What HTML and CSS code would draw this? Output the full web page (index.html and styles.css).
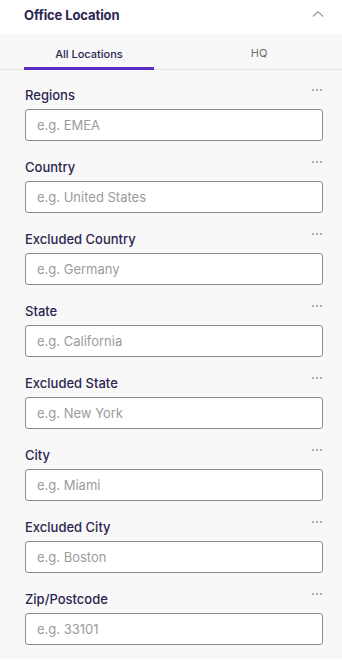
FILE: index.html
```html
<!DOCTYPE html>
<html lang="en">

<head>
    <meta charset="UTF-8">
    <meta name="viewport" content="width=device-width, initial-scale=1.0">
    <title>Office Location</title>
    <link rel="stylesheet" href="styles.css">
</head>

<body>

    <div class="section-header">
        <h3>Office Location</h3>
        <svg class="chevron" width="12" height="8" viewBox="0 0 12 8">
            <path d="M1 6.5 L6 1.5 L11 6.5" fill="none" stroke="#9a9a9a" stroke-width="1.2" />
        </svg>
    </div>

    <div class="panel">
        <div class="tabs">
            <div class="tab active">All Locations</div>
            <div class="tab">HQ</div>
        </div>

        <div class="fields">
            <div class="field">
                <div class="field-top">
                    <label>Regions</label>
                    <span class="more"><i></i><i></i><i></i></span>
                </div>
                <input type="text" placeholder="e.g. EMEA">
            </div>
            <div class="field">
                <div class="field-top">
                    <label>Country</label>
                    <span class="more"><i></i><i></i><i></i></span>
                </div>
                <input type="text" placeholder="e.g. United States">
            </div>
            <div class="field">
                <div class="field-top">
                    <label>Excluded Country</label>
                    <span class="more"><i></i><i></i><i></i></span>
                </div>
                <input type="text" placeholder="e.g. Germany">
            </div>
            <div class="field">
                <div class="field-top">
                    <label>State</label>
                    <span class="more"><i></i><i></i><i></i></span>
                </div>
                <input type="text" placeholder="e.g. California">
            </div>
            <div class="field">
                <div class="field-top">
                    <label>Excluded State</label>
                    <span class="more"><i></i><i></i><i></i></span>
                </div>
                <input type="text" placeholder="e.g. New York">
            </div>
            <div class="field">
                <div class="field-top">
                    <label>City</label>
                    <span class="more"><i></i><i></i><i></i></span>
                </div>
                <input type="text" placeholder="e.g. Miami">
            </div>
            <div class="field">
                <div class="field-top">
                    <label>Excluded City</label>
                    <span class="more"><i></i><i></i><i></i></span>
                </div>
                <input type="text" placeholder="e.g. Boston">
            </div>
            <div class="field">
                <div class="field-top">
                    <label>Zip/Postcode</label>
                    <span class="more"><i></i><i></i><i></i></span>
                </div>
                <input type="text" placeholder="e.g. 33101">
            </div>
        </div>
    </div>

</body>

</html>
```

FILE: styles.css
```css
* {
    box-sizing: border-box;
    font-family: Inter, "Noto Sans", sans-serif;
}

body {
    margin: 0;
    padding: 0;
    background-color: #ffffff;
    color: #2b2550;
}

/* header */
.section-header {
    height: 34px;
    display: flex;
    justify-content: space-between;
    align-items: center;
    padding: 0 18px 5px 24px;
}

.section-header h3 {
    margin: 0;
    font-size: 13px;
    font-weight: 700;
    color: #2b2550;
    letter-spacing: -0.1px;
}

.chevron {
    margin-top: -1px;
}

/* gray panel */
.panel {
    background-color: #f8f8f8;
    padding-bottom: 14px;
}

.tabs {
    display: flex;
    justify-content: space-between;
    padding: 0 18px 0 24px;
    border-bottom: 1px solid #e5e5e5;
    height: 36px;
}

.tab {
    width: 130px;
    display: flex;
    justify-content: center;
    align-items: center;
    font-size: 11px;
    color: #6e6e6e;
    padding-top: 4px;
    padding-bottom: 1px;
}

.tab.active {
    color: #2b2550;
    font-weight: 500;
    border-bottom: 3px solid #5a2dc4;
    margin-bottom: -1px;
    padding-top: 6px;
    padding-bottom: 0;
}

.fields {
    padding: 17px 19px 0 25px;
    display: flex;
    flex-direction: column;
    gap: 18px;
}

.field-top {
    display: flex;
    justify-content: space-between;
    align-items: flex-start;
    height: 16px;
    margin-bottom: 6px;
}

.field-top label {
    font-size: 13px;
    font-weight: 500;
    line-height: 16px;
    color: #2b2550;
}

.more {
    display: flex;
    gap: 2px;
    margin-top: 2px;
    margin-right: 1px;
}

.more i {
    width: 2px;
    height: 2px;
    border-radius: 50%;
    background-color: #999999;
}

.field input {
    width: 298px;
    height: 32px;
    border: 1px solid #8e8e8e;
    border-radius: 3px;
    background-color: #ffffff;
    padding: 0 11px;
    font-size: 13px;
    color: #2b2550;
    outline: none;
}

.field input::placeholder {
    color: #9b9b9b;
}
```
